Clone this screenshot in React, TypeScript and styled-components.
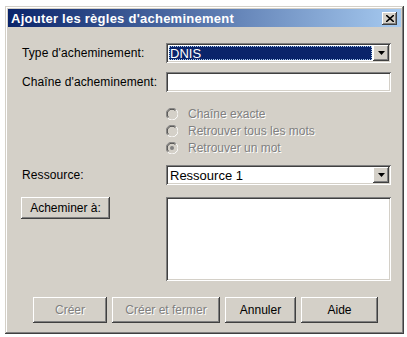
import React from "react";
import styled, { createGlobalStyle, css } from "styled-components";

const Global = createGlobalStyle`
  html, body { margin: 0; padding: 0; background: #ffffff; }
  body { font-family: "Liberation Sans", Arial, sans-serif; font-size: 12px; color: #000; }
  * { box-sizing: border-box; }
`;

const raised = css`
  box-shadow: inset -1px -1px #404040, inset 1px 1px #ffffff, inset -2px -2px #808080, inset 2px 2px #d4d0c8;
`;
const sunken = css`
  box-shadow: inset 1px 1px #808080, inset -1px -1px #ffffff, inset 2px 2px #404040, inset -2px -2px #d4d0c8;
`;

const Window = styled.div`
  margin: 6px 0 0 5px;
  width: 399px;
  height: 328px;
  background: #d4d0c8;
  padding: 3px;
  box-shadow: inset -1px -1px #404040, inset 1px 1px #d4d0c8, inset -2px -2px #808080, inset 2px 2px #ffffff;
  display: flex;
  flex-direction: column;
`;

const TitleBar = styled.div`
  height: 18px;
  display: flex;
  align-items: center;
  justify-content: space-between;
  padding: 0 4px 0 3px;
  background: linear-gradient(to right, #0a246a, #a6caf0);
`;

const Title = styled.span`
  color: #ffffff;
  font-weight: bold;
  font-size: 13px;
  letter-spacing: 0.25px;
`;

const CloseBtn = styled.div`
  width: 15px;
  height: 13px;
  background: #d4d0c8;
  ${raised};
  display: flex;
  align-items: center;
  justify-content: center;
`;

const Content = styled.div`
  padding: 16px 10px 0 14px;
  display: flex;
  flex-direction: column;
`;

const Row = styled.div<{ $mt?: number; $align?: string }>`
  display: grid;
  grid-template-columns: 144px 225px;
  align-items: ${(p) => p.$align || "center"};
  margin-top: ${(p) => p.$mt || 0}px;
`;

const Label = styled.span`
  font-size: 12px;
  letter-spacing: 0.1px;
`;

const Combo = styled.div`
  height: 20px;
  background: #fff;
  ${sunken};
  padding: 2px;
  display: flex;
  align-items: stretch;
`;

const ComboValue = styled.div<{ $selected?: boolean }>`
  flex: 1;
  margin: 1px;
  padding-left: 1px;
  display: flex;
  align-items: center;
  font-size: 13px;
  ${(p) =>
    p.$selected &&
    css`
      background: #0a246a;
      color: #fff;
      outline: 1px dotted #a6caf0;
      outline-offset: -1px;
    `}
`;

const ComboButton = styled.div`
  width: 16px;
  background: #d4d0c8;
  ${raised};
  display: flex;
  align-items: center;
  justify-content: center;
`;

const TextField = styled.div`
  height: 20px;
  background: #fff;
  ${sunken};
`;

const RadioGroup = styled.div`
  display: flex;
  flex-direction: column;
  margin: 13px 0 0 144px;
`;

const RadioRow = styled.div`
  height: 17px;
  display: flex;
  align-items: center;
  gap: 10px;
`;

const DisabledText = styled.span`
  color: #808080;
  text-shadow: 1px 1px #ffffff;
  font-size: 12px;
`;

const Button = styled.div<{ $w: number; $h?: number }>`
  width: ${(p) => p.$w}px;
  height: ${(p) => p.$h || 26}px;
  background: #d4d0c8;
  ${raised};
  display: flex;
  align-items: center;
  justify-content: center;
  font-size: 12px;
`;

const ListBox = styled.div`
  height: 84px;
  background: #fff;
  ${sunken};
`;

const Footer = styled.div`
  display: flex;
  gap: 5px;
  margin: 16px 0 0 25px;
`;

const Radio = ({ checked }: { checked?: boolean }) => (
  <svg width="12" height="12" viewBox="0 0 12 12">
    <circle cx="6" cy="6" r="5.5" fill="#d4d0c8" />
    <path d="M1.8 10.2 A5.5 5.5 0 0 1 10.2 1.8" stroke="#808080" fill="none" />
    <path d="M10.2 1.8 A5.5 5.5 0 0 1 1.8 10.2" stroke="#ffffff" fill="none" />
    <path d="M2.6 9.4 A4.5 4.5 0 0 1 9.4 2.6" stroke="#404040" fill="none" />
    <path d="M9.4 2.6 A4.5 4.5 0 0 1 2.6 9.4" stroke="#d4d0c8" fill="none" />
    {checked && <circle cx="6" cy="6" r="2" fill="#808080" />}
  </svg>
);

const Arrow = () => (
  <svg width="7" height="4" viewBox="0 0 7 4">
    <path d="M0 0 H7 L3.5 4 Z" fill="#000" />
  </svg>
);

export default function App() {
  return (
    <>
      <Global />
      <Window>
        <TitleBar>
          <Title>Ajouter les règles d'acheminement</Title>
          <CloseBtn>
            <svg width="8" height="7" viewBox="0 0 8 7">
              <path d="M0 0 L8 7 M8 0 L0 7" stroke="#000" strokeWidth="1.6" />
            </svg>
          </CloseBtn>
        </TitleBar>
        <Content>
          <Row>
            <Label>Type d'acheminement:</Label>
            <Combo>
              <ComboValue $selected>DNIS</ComboValue>
              <ComboButton>
                <Arrow />
              </ComboButton>
            </Combo>
          </Row>
          <Row $mt={9}>
            <Label>Chaîne d'acheminement:</Label>
            <TextField />
          </Row>
          <RadioGroup>
            <RadioRow>
              <Radio />
              <DisabledText>Chaîne exacte</DisabledText>
            </RadioRow>
            <RadioRow>
              <Radio />
              <DisabledText>Retrouver tous les mots</DisabledText>
            </RadioRow>
            <RadioRow>
              <Radio checked />
              <DisabledText>Retrouver un mot</DisabledText>
            </RadioRow>
          </RadioGroup>
          <Row $mt={9}>
            <Label>Ressource:</Label>
            <Combo>
              <ComboValue>Ressource 1</ComboValue>
              <ComboButton>
                <Arrow />
              </ComboButton>
            </Combo>
          </Row>
          <Row $mt={12} $align="start">
            <div>
              <Button $w={89} $h={22} style={{ marginLeft: -1 }}>Acheminer à:</Button>
            </div>
            <ListBox />
          </Row>
        </Content>
        <Footer>
          <Button $w={74}>
            <DisabledText>Créer</DisabledText>
          </Button>
          <Button $w={108}>
            <DisabledText>Créer et fermer</DisabledText>
          </Button>
          <Button $w={71}>Annuler</Button>
          <Button $w={77}>Aide</Button>
        </Footer>
      </Window>
    </>
  );
}
